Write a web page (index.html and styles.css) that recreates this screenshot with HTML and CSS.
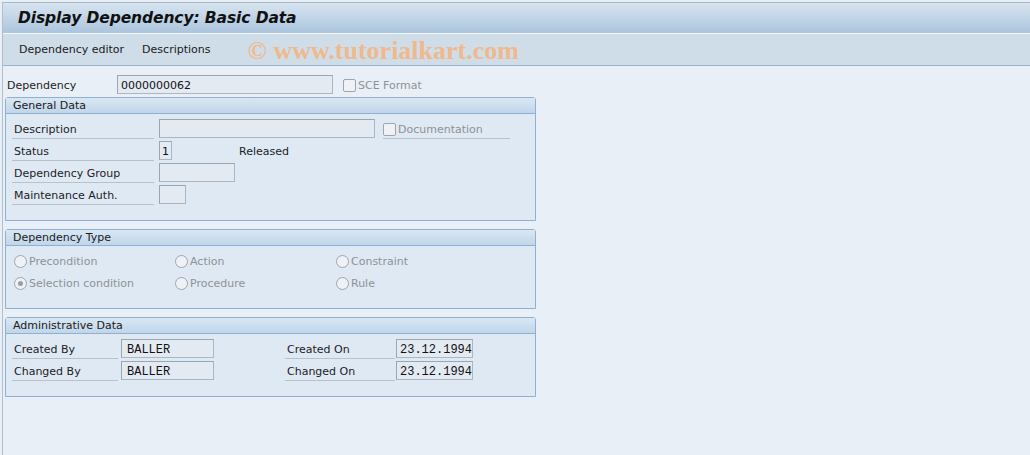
FILE: index.html
```html
<!DOCTYPE html>
<html>
<head>
<meta charset="utf-8">
<link rel="stylesheet" href="styles.css">
</head>
<body>
<div class="window">
  <div class="titlebar"><h1 class="title">Display Dependency: Basic Data</h1></div>
  <div class="menubar">
    <span class="menu-item">Dependency editor</span>
    <span class="menu-item">Descriptions</span>
    <span class="watermark">© www.tutorialkart.com</span>
  </div>
  <div class="content">
    <div class="toprow">
      <span class="toplabel">Dependency</span>
      <span class="field w-dep">0000000062</span>
      <span class="check disabled"><span class="box"></span>SCE Format</span>
    </div>

    <section class="group g-general">
      <div class="group-head">General Data</div>
      <div class="group-body">
        <div class="row">
          <span class="label">Description</span>
          <span class="field w-desc"></span>
          <span class="check disabled underline"><span class="box"></span>Documentation</span>
        </div>
        <div class="row">
          <span class="label">Status</span>
          <span class="field w-status">1</span>
          <span class="status-text">Released</span>
        </div>
        <div class="row">
          <span class="label">Dependency Group</span>
          <span class="field w-group"></span>
        </div>
        <div class="row">
          <span class="label">Maintenance Auth.</span>
          <span class="field w-auth"></span>
        </div>
      </div>
    </section>

    <section class="group g-type">
      <div class="group-head">Dependency Type</div>
      <div class="group-body radios">
        <span class="radio"><span class="dot"></span>Precondition</span>
        <span class="radio"><span class="dot"></span>Action</span>
        <span class="radio"><span class="dot"></span>Constraint</span>
        <span class="radio"><span class="dot on"></span>Selection condition</span>
        <span class="radio"><span class="dot"></span>Procedure</span>
        <span class="radio"><span class="dot"></span>Rule</span>
      </div>
    </section>

    <section class="group g-admin">
      <div class="group-head">Administrative Data</div>
      <div class="group-body admin">
        <div class="row">
          <span class="label short">Created By</span>
          <span class="field mono w-user">BALLER</span>
          <span class="label short2">Created On</span>
          <span class="field mono w-date">23.12.1994</span>
        </div>
        <div class="row">
          <span class="label short">Changed By</span>
          <span class="field mono w-user">BALLER</span>
          <span class="label short2">Changed On</span>
          <span class="field mono w-date">23.12.1994</span>
        </div>
      </div>
    </section>
  </div>
</div>
</body>
</html>
```

FILE: styles.css
```css
html, body {
  margin: 0;
  padding: 0;
  height: 100%;
  background: #e9eff6;
}
body {
  font-family: "DejaVu Sans", "Liberation Sans", sans-serif;
  font-size: 11px;
  color: #1c1c1c;
}
.window {
  margin-left: 2px;
  border-left: 1px solid #b4bec9;
  min-height: 455px;
  box-sizing: border-box;
  background: #e9eff6;
}
.titlebar {
  margin-top: 2px;
  border-top: 1px solid #a9b6c4;
  height: 30px;
  background: linear-gradient(#d7e4f0, #abc5dd);
  display: flex;
  align-items: center;
  padding-left: 15px;
}
.title {
  margin: 0;
  font-family: "DejaVu Sans", sans-serif;
  font-size: 15.5px;
  font-weight: bold;
  font-style: italic;
  color: #111;
  letter-spacing: -0.1px;
}
.menubar {
  border-top: 1px solid #f4f8fb;
  border-bottom: 1px solid #9db1c5;
  background: #cfdde8;
  height: 31px;
  display: flex;
  align-items: center;
  padding-left: 16px;
}
.menu-item {
  margin-right: 18px;
  color: #1a1a1a;
}
.watermark {
  margin-left: 19px;
  margin-top: 3px;
  font-family: "Liberation Serif", serif;
  font-weight: bold;
  font-size: 26px;
  color: #f0b98c;
}
.content {
  padding: 9px 0 0 2px;
}
.toprow {
  display: flex;
  align-items: center;
  height: 19px;
  padding-left: 2px;
}
.toplabel {
  width: 110px;
  padding-top: 2px;
}
.field {
  box-sizing: border-box;
  height: 19px;
  background: #e3eaf1;
  border: 1px solid #aab6c2;
  border-top-color: #9aa6b2;
  border-left-color: #9aa6b2;
  padding: 2px 3px 0;
  display: inline-flex;
  align-items: center;
  color: #111;
}
.w-dep { width: 216px; }
.w-desc { width: 216px; }
.w-status { width: 13px; padding: 2px 2px 0; }
.w-group { width: 76px; }
.w-auth { width: 27px; }
.w-user { width: 93px; }
.w-date { width: 77px; }
.mono {
  font-family: "Liberation Mono", monospace;
  font-size: 12px;
  padding-left: 5px;
}
.w-date.mono { padding-left: 3px; }
.check {
  display: inline-flex;
  align-items: center;
  margin-left: 10px;
  color: #8e9296;
  padding-top: 2px;
}
.check .box {
  width: 11px;
  height: 11px;
  border: 1px solid #9ea6ae;
  border-radius: 2px;
  background: #eef2f6;
  margin-right: 2px;
}
.check.underline {
  margin-left: 8px;
  width: 127px;
  height: 20px;
  border-bottom: 1px solid #b8c2cc;
  box-sizing: border-box;
  align-self: flex-start;
}
.group {
  margin-top: 3px;
  width: 531px;
  box-sizing: border-box;
  border: 1px solid #8fb0d0;
  border-radius: 3px 3px 0 0;
  background: #dfe9f3;
}
.g-general { height: 124px; }
.g-type { margin-top: 8px; height: 80px; }
.g-admin { margin-top: 8px; height: 80px; }
.group-head {
  height: 15px;
  line-height: 16px;
  padding-left: 7px;
  background: linear-gradient(#d9e7f3, #c0d6ea);
  border-bottom: 1px solid #8fb0d0;
  color: #1a1a1a;
}
.group-body {
  padding: 5px 0 0 6px;
}
.row {
  display: flex;
  align-items: flex-start;
  height: 22px;
}
.row .label {
  width: 142px;
  height: 20px;
  box-sizing: border-box;
  border-bottom: 1px solid #b8c2cc;
  padding: 2px 0 0 2px;
  display: flex;
  align-items: center;
  margin-right: 5px;
}
.status-text {
  margin-left: 67px;
  padding-top: 4px;
}
.radios {
  display: grid;
  grid-template-columns: 161px 161px 161px;
  grid-auto-rows: 22px;
  padding: 4px 0 0 8px;
}
.radio {
  display: flex;
  align-items: center;
  color: #8e9296;
}
.dot {
  width: 11px;
  height: 11px;
  border: 1px solid #9ea6ae;
  border-radius: 50%;
  background: #eef2f6;
  margin-right: 2px;
  position: relative;
  box-sizing: content-box;
}
.dot.on::after {
  content: "";
  position: absolute;
  left: 3px;
  top: 3px;
  width: 5px;
  height: 5px;
  border-radius: 50%;
  background: #9a9ea2;
}
.admin .label.short {
  width: 106px;
  margin-right: 3px;
}
.admin .label.short2 {
  width: 110px;
  margin-left: 71px;
  margin-right: 1px;
}
```
